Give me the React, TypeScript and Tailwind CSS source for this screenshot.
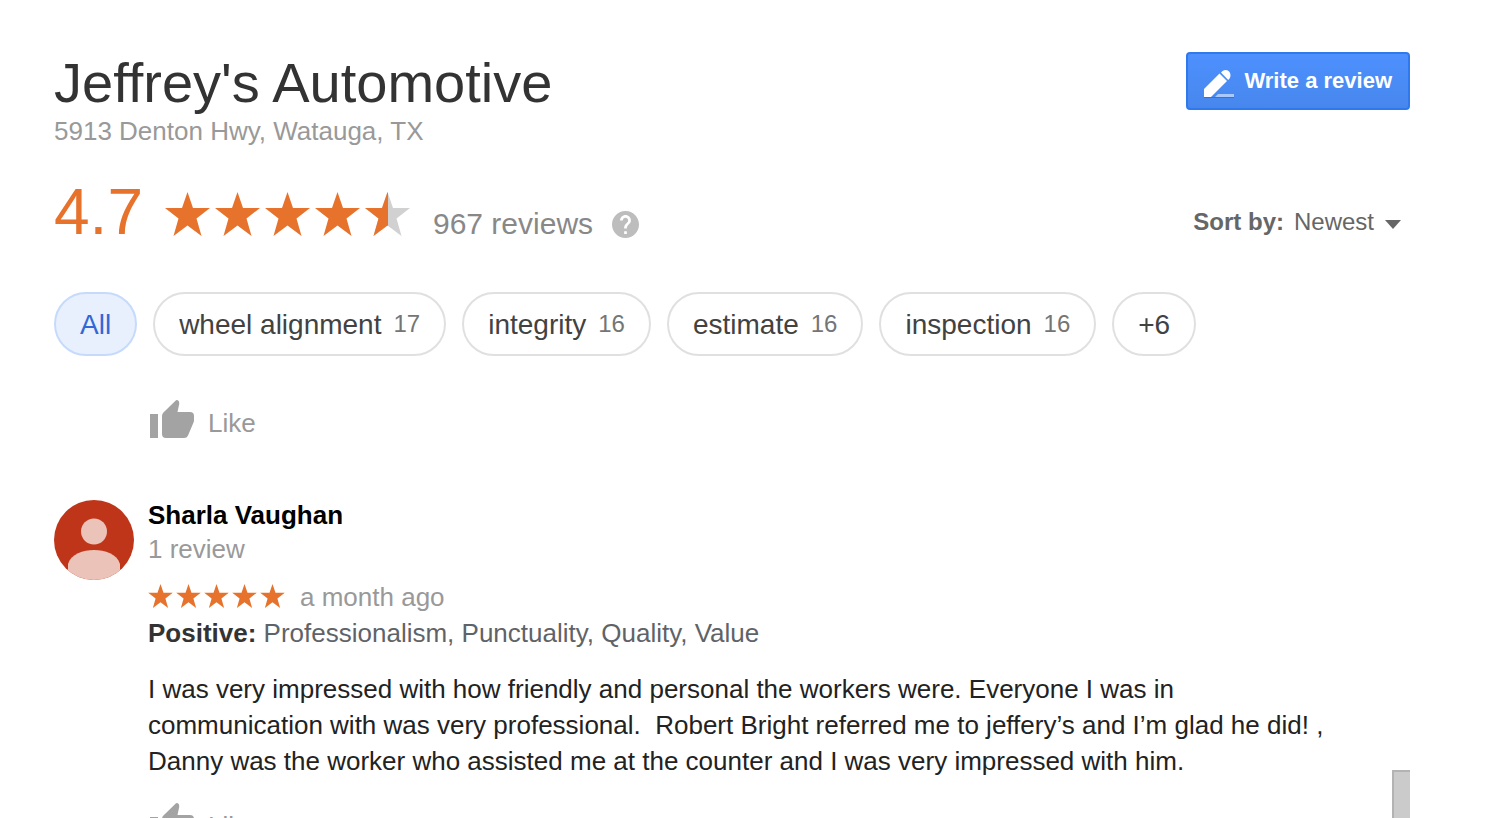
import React from 'react';

const TOPICS = [
  { id: 1, label: 'All', selected: true },
  { id: 2, label: 'wheel alignment', count: 17 },
  { id: 3, label: 'integrity', count: 16 },
  { id: 4, label: 'estimate', count: 16 },
  { id: 5, label: 'inspection', count: 16 },
  { id: 6, label: '+6' },
];

const STAR_POINTS =
  '22.5,0 28,16 45,16 31.5,26.5 36.5,44 22.5,33.5 8.5,44 13.5,26.5 0,16 17,16';
const LEFT_HALF_POINTS = '22.5,0 23,1.5 23,34 22.5,33.5 8.5,44 13.5,26.5 0,16 17,16';

const Star = ({ className, half = false }: { className: string; half?: boolean }) => (
  <svg viewBox="0 0 45 44" className={className} aria-hidden="true">
    <polygon points={STAR_POINTS} fill={half ? '#d1d1d1' : '#e7722b'} />
    {half && <polygon points={LEFT_HALF_POINTS} fill="#e7722b" />}
  </svg>
);

const LikeButton = () => (
  <button type="button" className="flex items-start gap-3.5 pl-0.5 text-[#999]">
    <svg viewBox="0 0 44 38" className="h-[38px] w-11" fill="#a3a3a3" aria-hidden="true">
      <path d="M0 14h8v24H0z" />
      <path d="M25.500.7 13.200 12.800Q12 14 12 16v18q0 4 4 4h18q3 0 4-2.500l5.500-13q.5-1 .5-2.500v-4q0-4-4-4H27.500L29.200 4q.3-3-1.400-3.700-1.300-.6-2.300.4z" />
    </svg>
    <span className="text-[26px] leading-[46px]">Like</span>
  </button>
);

const Avatar = () => (
  <svg viewBox="0 0 80 80" className="mt-0.5 size-20 shrink-0 rounded-full" aria-hidden="true">
    <rect width="80" height="80" fill="#bf3519" />
    <circle cx="40" cy="31.500" r="13" fill="#ebc3b8" />
    <path d="M14 80V64C17 54 29 50 40 50s23 4 26 14v16z" fill="#ebc3b8" />
  </svg>
);

const Header = () => (
  <header className="flex items-start justify-between">
    <div>
      <h1 className="text-[56px] leading-[62px] text-[#333]">Jeffrey's Automotive</h1>
      <p className="text-[26px] leading-[34px] text-[#999]">5913 Denton Hwy, Watauga, TX</p>
    </div>
    <button
      type="button"
      className="flex items-center gap-2.5 rounded border-2 border-[#3079ed] bg-linear-to-b from-[#4d90fe] to-[#4787ed] px-4 text-[22px] leading-[54px] font-bold text-white"
    >
      <svg viewBox="0 0 30 28" className="mt-1.5 h-7 w-[30px]" aria-hidden="true">
        <path d="M0 27h30v1H0z" fill="#3c70c4" />
        <path d="M14 24h16v3H11z" fill="#a9c8fb" />
        <path d="M0 27v-8L15.500 3.500l7.500 7.500L7 27z" fill="#fff" />
        <path d="M17 2.500 18.500 1Q20 0 22 0q4 .5 4.500 5 0 2-1 3.500L24.200 10z" fill="#fff" />
      </svg>
      Write a review
    </button>
  </header>
);

const Summary = () => (
  <div className="mt-8 flex items-end justify-between">
    <div className="flex items-end">
      <span className="text-[64px] leading-[64px] text-[#e7722b]">4.7</span>
      <div className="mb-2 ml-[22px] flex gap-[5px]" role="img" aria-label="Rated 4.7 out of 5">
        <Star className="h-11 w-[45px]" />
        <Star className="h-11 w-[45px]" />
        <Star className="h-11 w-[45px]" />
        <Star className="h-11 w-[45px]" />
        <Star className="h-11 w-[45px]" half />
      </div>
      <div className="ml-[23px] flex items-center gap-[19px]">
        <span className="text-[30px] leading-10 text-[#888]">967 reviews</span>
        <button type="button" aria-label="About reviews">
          <svg viewBox="2 2 20 20" className="size-[27px]" fill="#bdbdbd">
            <path d="M12 2C6.480 2 2 6.480 2 12s4.480 10 10 10 10-4.480 10-10S17.520 2 12 2zm1 17h-2v-2h2v2zm2.070-7.750-.9.920C13.450 12.900 13 13.500 13 15h-2v-.5c0-1.100.45-2.100 1.170-2.830l1.240-1.260c.37-.36.59-.86.59-1.410 0-1.100-.9-2-2-2s-2 .9-2 2H8c0-2.210 1.790-4 4-4s4 1.790 4 4c0 .88-.36 1.680-.93 2.250z" />
          </svg>
        </button>
      </div>
    </div>
    <div className="mb-0.5 flex items-center pr-[9px] text-2xl leading-10 text-[#666]">
      <label htmlFor="sort" className="font-bold">
        Sort by:
      </label>
      <select id="sort" className="ml-2.5 appearance-none bg-transparent leading-10">
        <option>Newest</option>
      </select>
      <svg viewBox="0 0 16 9" className="mt-1 ml-2.5 h-[9px] w-4" fill="#666" aria-hidden="true">
        <path d="M0 0h16L8 9z" />
      </svg>
    </div>
  </div>
);

const Topics = () => (
  <div className="mt-12 flex gap-4">
    {TOPICS.map(topic => (
      <button
        key={topic.id}
        type="button"
        className={`flex h-16 items-center gap-3 rounded-full border-2 px-6 text-[28px] whitespace-nowrap ${
          topic.selected
            ? 'border-[#c6dafc] bg-[#e8f0fe] text-[#3367d6]'
            : 'border-[#e0e0e0] bg-white text-[#424242]'
        }`}
      >
        <span className="pt-0.5">{topic.label}</span>
        {topic.count && <span className="text-2xl text-[#757575]">{topic.count}</span>}
      </button>
    ))}
  </div>
);

const Review = () => (
  <article className="mt-[52px] flex gap-3.5">
    <Avatar />
    <div className="min-w-0 flex-1 text-[26px] leading-9">
      <h2 className="leading-[34px] font-bold text-black">Sharla Vaughan</h2>
      <p className="leading-[34px] text-[#999]">1 review</p>
      <div className="mt-[13px] flex items-center gap-[15px]">
        <div className="mb-0.5 flex gap-[3px]" role="img" aria-label="Rated 5 out of 5">
          {[1, 2, 3, 4, 5].map(n => (
            <Star key={n} className="h-6 w-[25px]" />
          ))}
        </div>
        <span className="text-[#999]">a month ago</span>
      </div>
      <p className="text-[#5f6368]">
        <b className="text-[#333]">Positive:</b> Professionalism, Punctuality, Quality, Value
      </p>
      <p className="mt-5 mb-6 text-[#222]">
        I was very impressed with how friendly and personal the workers were. Everyone I was in
        communication with was very professional.&nbsp; Robert Bright referred me to jeffery’s and
        I’m glad he did! , Danny was the worker who assisted me at the counter and I was very
        impressed with him.
      </p>
      <LikeButton />
    </div>
  </article>
);

const App = () => {
  return (
    <div className="flex h-screen flex-col overflow-hidden bg-white pt-[52px] pr-[78px] pl-[54px] font-['Liberation_Sans',Arial,sans-serif]">
      <Header />
      <Summary />
      <Topics />
      <main className="flex min-h-0 flex-1">
        <div className="min-w-0 flex-1 overflow-hidden pt-11 pr-14">
          <div className="pl-[94px]">
            <LikeButton />
          </div>
          <Review />
        </div>
        {/* scrollbar */}
        <div className="flex w-[18px] flex-col justify-end" aria-hidden="true">
          <div className="h-12 border-t-2 border-l-2 border-[#b3b3b3] bg-[#cbcbcb]" />
        </div>
      </main>
    </div>
  );
};

export default App;
